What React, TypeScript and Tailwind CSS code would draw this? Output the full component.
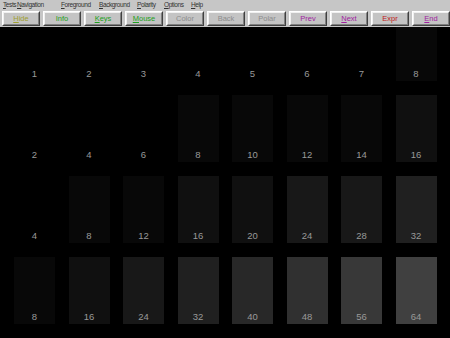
import React from "react";

const menus: { label: string; w: string }[] = [
  { label: "Tests", w: "w-[14px]" },
  { label: "Navigation", w: "w-[44px]" },
  { label: "Foreground", w: "w-[38px]" },
  { label: "Background", w: "w-[38px]" },
  { label: "Polarity", w: "w-[27px]" },
  { label: "Options", w: "w-[27px]" },
  { label: "Help", w: "w-[20px]" },
];

const buttons: { label: string; color: string; u?: boolean }[] = [
  { label: "Hide", color: "#a0a030", u: true },
  { label: "Info", color: "#20a020" },
  { label: "Keys", color: "#20a020", u: true },
  { label: "Mouse", color: "#20a020", u: true },
  { label: "Color", color: "#8c8c8c" },
  { label: "Back", color: "#8c8c8c" },
  { label: "Polar", color: "#8c8c8c" },
  { label: "Prev", color: "#a020a0" },
  { label: "Next", color: "#a020a0", u: true },
  { label: "Expr", color: "#c02020" },
  { label: "End", color: "#a020a0", u: true },
];

const rows = [1, 2, 4, 8];
const cols = [1, 2, 3, 4, 5, 6, 7, 8];

export default function App() {
  return (
    <div
      className="w-[450px] h-[338px] bg-black overflow-hidden flex flex-col"
      style={{ fontFamily: '"Liberation Sans", Arial, sans-serif' }}
    >
      <div className="h-[11px] bg-[#c6c6c6] flex items-center pl-[3px] text-[6.5px] tracking-[-0.4px] leading-none text-[#333333]">
        {menus.map((m) => (
          <span key={m.label} className={`${m.w} shrink-0 whitespace-nowrap`}>
            <span className="underline">{m.label[0]}</span>
            {m.label.slice(1)}
          </span>
        ))}
      </div>
      <div className="h-[16px] bg-[#c6c6c6] flex items-stretch pl-[2px] gap-[3px] pb-[1px]">
        {buttons.map((b) => (
          <div
            key={b.label}
            className="w-[38px] border border-t-white border-l-white border-b-[#404040] border-r-[#404040] flex"
          >
            <div
              className="flex-1 border border-t-[#f0f0f0] border-l-[#f0f0f0] border-b-[#808080] border-r-[#808080] bg-[#c4c4c4] flex items-center justify-center text-[7.5px] leading-none"
              style={{ color: b.color }}
            >
              {b.u ? (
                <span>
                  <span className="underline">{b.label[0]}</span>
                  {b.label.slice(1)}
                </span>
              ) : (
                b.label
              )}
            </div>
          </div>
        ))}
      </div>
      <div className="flex-1 bg-black overflow-hidden">
        <div className="mt-[-13px] pl-[14px] flex flex-col gap-[14px]">
          {rows.map((r) => (
            <div key={r} className="flex gap-[13.5px]">
              {cols.map((c) => {
                const v = r * c;
                const g = Math.floor(v / 8) * 8;
                return (
                  <div
                    key={c}
                    className="w-[41px] h-[67px] flex items-end justify-center pb-[1px] text-[9.5px] leading-[12px] text-[#999999]"
                    style={{ backgroundColor: `rgb(${g},${g},${g})` }}
                  >
                    {v}
                  </div>
                );
              })}
            </div>
          ))}
        </div>
      </div>
    </div>
  );
}
